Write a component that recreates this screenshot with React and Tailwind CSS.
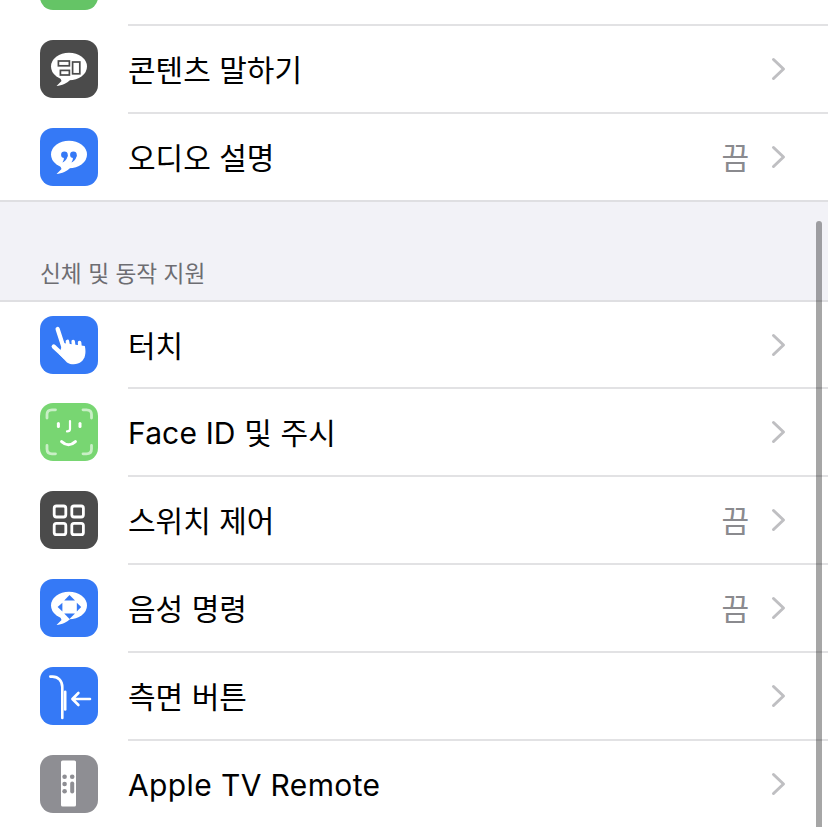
const FONT = "font-['Inter','Noto_Sans_CJK_KR',sans-serif]";

const Bubble = ({ children, fill = 'white' }) => (
  <>
    <ellipse cx="29" cy="26.5" rx="18" ry="13.8" fill={fill} />
    <path d="M19 35 L21.5 41 L16.5 46 C22 45.5 27 43.5 31 39 Z" fill={fill} />
    {children}
  </>
);

const SpeakIcon = () => (
  <Bubble>
    <g fill="none" stroke="#4b4b4b" strokeWidth="1.7">
      <rect x="18.4" y="21" width="11" height="4.8" />
      <rect x="20.4" y="30.4" width="9" height="4.6" />
      <rect x="32.6" y="22" width="7.2" height="11.8" />
    </g>
  </Bubble>
);

const QuoteIcon = () => (
  <Bubble>
    <g fill="#3579f6">
      <circle cx="24.4" cy="26.8" r="3.3" />
      <path d="M27.7 26.8 C27.7 30.4 25.4 33.4 22.4 34.6 C23.8 32.4 24 30.8 23.8 29 Z" />
      <circle cx="33.4" cy="26.8" r="3.3" />
      <path d="M36.7 26.8 C36.7 30.4 34.4 33.4 31.4 34.6 C32.8 32.4 33 30.8 32.8 29 Z" />
    </g>
  </Bubble>
);

const HandIcon = () => (
  <g>
    <path d="M23 27 L44.8 30 C46.4 37 45 42.5 41.5 45.6 C37.5 49 31 49 27 46.4 L19 38 Z" fill="white" />
    <g fill="none" stroke="white" strokeLinecap="round">
      <path d="M17.6 13 L24.4 34" strokeWidth="4.2" />
      <path d="M13.8 30.6 L25 41" strokeWidth="4.4" />
      <path d="M27.4 25.4 L28.8 33" strokeWidth="3.6" />
      <path d="M33.2 25.6 L34 33" strokeWidth="3.6" />
      <path d="M39.6 26.6 L40.2 34" strokeWidth="3.6" />
    </g>
  </g>
);

const FaceIcon = () => (
  <g fill="none" strokeLinecap="round">
    <g stroke="white" strokeOpacity="0.6" strokeWidth="2.8">
      <path d="M7 15 V11.5 C7 8.5 9 6.8 12 6.8 H15.5" />
      <path d="M43 6.8 H46.5 C49.5 6.8 51.5 8.5 51.5 11.5 V15" />
      <path d="M7 42.5 V46 C7 49 9 50.8 12 50.8 H15.5" />
      <path d="M43 50.8 H46.5 C49.5 50.8 51.5 49 51.5 46 V42.5" />
    </g>
    <g stroke="white" strokeWidth="3">
      <path d="M18.4 20.6 V23.6" />
      <path d="M40 20.6 V23.6" />
      <path d="M21.6 38.6 C26 42.6 31 42.6 35.4 38.6" />
    </g>
    <path d="M30 18 V26 C30 27.6 29 28.4 27 28.4" stroke="white" strokeWidth="2.2" />
  </g>
);

const GridIcon = () => (
  <g fill="none" stroke="white" strokeWidth="2.8">
    <rect x="14.2" y="15" width="11.6" height="11" rx="2.2" />
    <rect x="31.8" y="15" width="11.6" height="11" rx="2.2" />
    <rect x="14.2" y="32.3" width="11.6" height="11.4" rx="2.2" />
    <rect x="31.8" y="32.3" width="11.6" height="11.4" rx="2.2" />
  </g>
);

const VoiceIcon = () => (
  <Bubble>
    <g fill="#3579f6">
      <path d="M29.5 16 L35 21.4 H24.2 Z" />
      <path d="M29.5 40 L35 34.4 H24.2 Z" />
      <path d="M17.6 28 L22.4 23.8 V32.4 Z" />
      <path d="M41.2 28 L36.8 23.8 V32.4 Z" />
    </g>
  </Bubble>
);

const SideButtonIcon = () => (
  <g fill="none" stroke="white" strokeLinecap="round" strokeLinejoin="round" strokeWidth="2.6">
    <path d="M10.3 9.6 H12.5 C18.5 9.6 22.3 14 22.3 20 V51" />
    <path d="M25.2 24.8 V42.5" />
    <path d="M50 32 H32.5 M38.4 26 L32.4 32 L38.4 38" />
  </g>
);

const RemoteIcon = () => (
  <g>
    <rect x="21" y="5.4" width="15" height="46.2" rx="1.6" fill="white" />
    <g fill="#8e8e93">
      <circle cx="24.6" cy="21.8" r="2.3" />
      <circle cx="32.2" cy="21.8" r="2.3" />
      <circle cx="24.6" cy="29" r="2.3" />
      <circle cx="24.6" cy="36.2" r="2.3" />
      <rect x="30.2" y="26.4" width="4" height="12" rx="2" />
    </g>
  </g>
);

function AppIcon({ bg, children }) {
  return (
    <div className={`w-[58px] h-[58px] shrink-0 rounded-[13px] ${bg}`}>
      <svg viewBox="0 0 58 58" width="58" height="58">{children}</svg>
    </div>
  );
}

function Chevron() {
  return (
    <svg width="16" height="24" viewBox="0 0 16 24" className="shrink-0">
      <path d="M2.5 2.5 L12.5 12 L2.5 21.5" fill="none" stroke="#bfbfc2" strokeWidth="3" strokeLinecap="round" strokeLinejoin="round" />
    </svg>
  );
}

// settings row: the divider starts under the label, not under the icon
function Row({ icon, bg, label, labelClass = '', value, divider = true, height = 'h-[86px]' }) {
  return (
    <div className="bg-white">
      <div className={`flex items-center pl-10 pr-[41px] ${height}`}>
        <AppIcon bg={bg}>{icon}</AppIcon>
        <span className={`ml-[30px] flex-1 pt-[2px] text-[30px] leading-none text-black ${labelClass}`}>{label}</span>
        {value && <span className="mr-[22px] pt-[2px] text-[30px] leading-none text-[#8a8a8e]">{value}</span>}
        <Chevron />
      </div>
      {divider && <div className="ml-[128px] h-[2px] bg-[#e2e2e4]" />}
    </div>
  );
}

export default function App() {
  return (
    <div className={`relative h-[827px] w-[828px] overflow-hidden bg-white ${FONT}`}>
      {/* tail of the row scrolled off the top */}
      <div className="h-[24px] overflow-hidden pl-10">
        <div className="-mt-[48px] h-[58px] w-[58px] rounded-[13px] bg-[#65c466]" />
      </div>
      <div className="ml-[128px] h-[2px] bg-[#e2e2e4]" />

      <Row icon={<SpeakIcon />} bg="bg-[#4b4b4b]" label="콘텐츠 말하기" />
      <Row icon={<QuoteIcon />} bg="bg-[#3579f6]" label="오디오 설명" value="끔" divider={false} />

      <div className="h-[102px] border-y-2 border-[#dfdfe2] bg-[#f2f2f7] pl-10 pt-[55px] text-[22.7px] leading-[34px] text-[#6d6d72]">
        신체 및 동작 지원
      </div>

      <Row icon={<HandIcon />} bg="bg-[#3579f6]" label="터치" height="h-[85px]" />
      <Row icon={<FaceIcon />} bg="bg-[#78d672]" label="Face ID 및 주시" labelClass="tracking-[0.15px]" />
      <Row icon={<GridIcon />} bg="bg-[#4b4b4b]" label="스위치 제어" value="끔" />
      <Row icon={<VoiceIcon />} bg="bg-[#3579f6]" label="음성 명령" value="끔" />
      <Row icon={<SideButtonIcon />} bg="bg-[#3579f6]" label="측면 버튼" />
      <Row icon={<RemoteIcon />} bg="bg-[#8e8e93]" label="Apple TV Remote" labelClass="tracking-[0.38px]" divider={false} />

      {/* overlay scroll indicator */}
      <div className="absolute left-[816px] top-[221px] h-[620px] w-[6px] rounded-full bg-black/35" />
    </div>
  );
}
